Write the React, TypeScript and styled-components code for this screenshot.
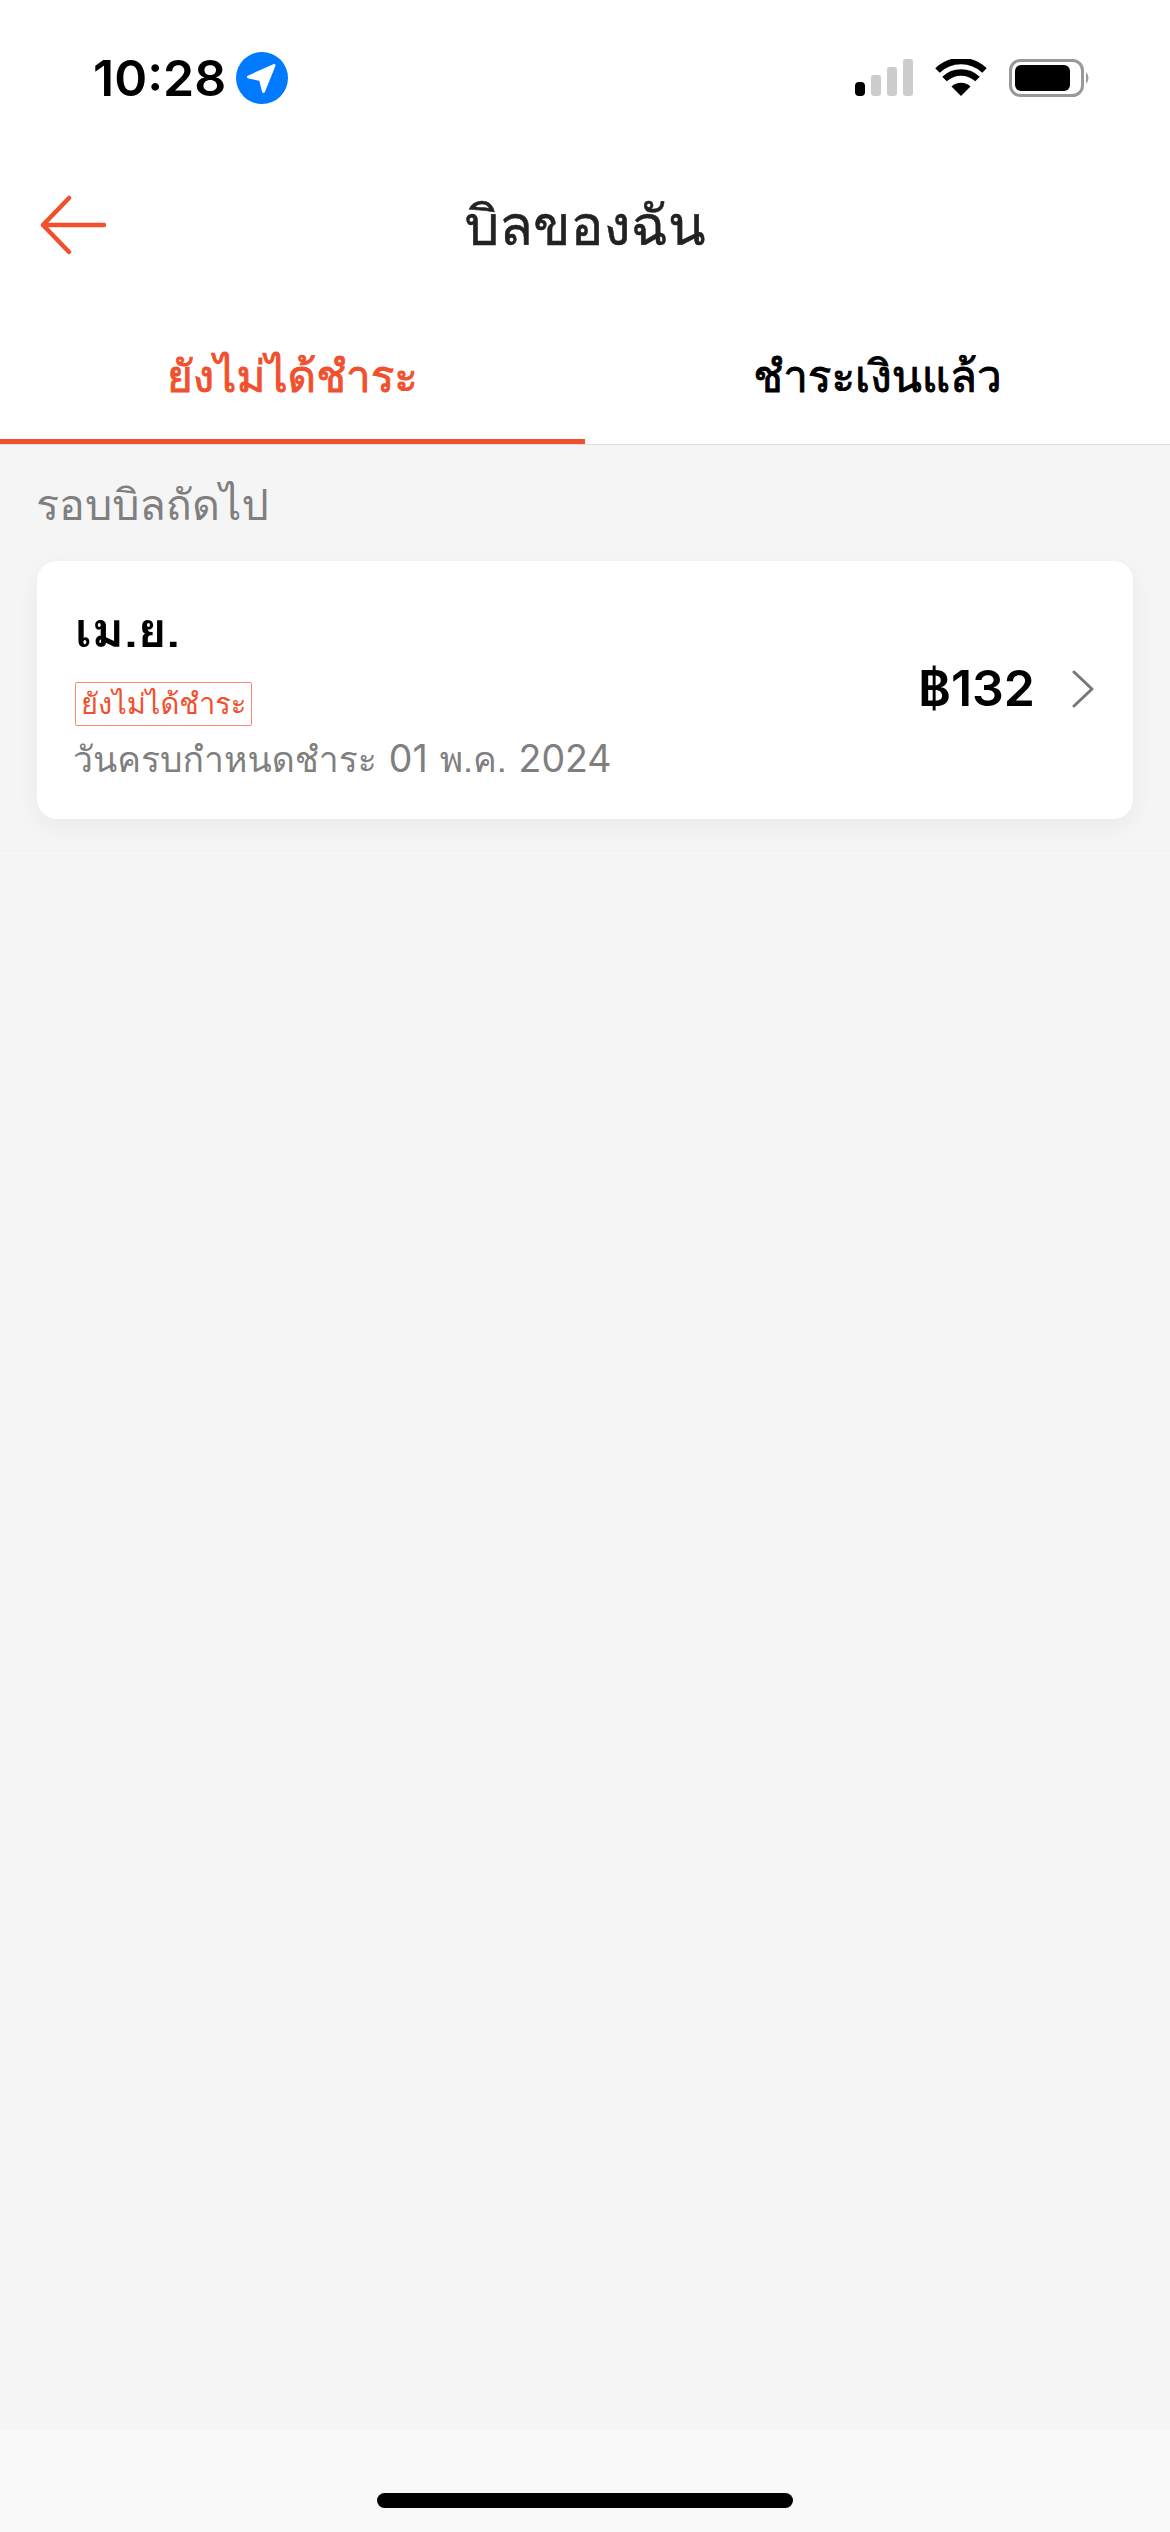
import * as React from "react";
import styled, { createGlobalStyle } from "styled-components";

const THAI = `Thonburi, Loma, Garuda, "Noto Sans Thai Looped", "Noto Sans Thai", "Noto Sans", sans-serif`;

const Global = createGlobalStyle`
    html, body {
        margin: 0;
        padding: 0;
        background: #f5f5f5;
    }
    * {
        box-sizing: border-box;
    }
`;

const App: React.FC = () => {
    return (
        <>
            <Global />
            <Page>
                <StatusBar>
                    <TimeGroup>
                        <Time>10:28</Time>
                        <svg width="52" height="52" viewBox="0 0 52 52">
                            <circle cx="26" cy="26" r="26" fill="#007aff" />
                            <path
                                d="M38 13.5 L12.5 25 L24.5 27.5 L27.5 39.5 Z"
                                fill="#fff"
                                stroke="#fff"
                                strokeWidth="3"
                                strokeLinejoin="round"
                            />
                        </svg>
                    </TimeGroup>
                    <StatusIcons>
                        <svg width="58" height="38" viewBox="0 0 58 38">
                            <rect x="0" y="23" width="10" height="14" rx="4" fill="#000" />
                            <rect x="16" y="16" width="10" height="21" rx="3" fill="#ccc" />
                            <rect x="32" y="8" width="10" height="29" rx="3" fill="#ccc" />
                            <rect x="48" y="0" width="10" height="37" rx="3" fill="#ccc" />
                        </svg>
                        <svg width="52" height="38" viewBox="0 0 52 38">
                            <path d="M26 37 L16.5 27.5 A14 14 0 0 1 35.5 27.5 Z" fill="#000" />
                            <path
                                d="M9.5 20 A24 24 0 0 1 42.5 20"
                                fill="none"
                                stroke="#000"
                                strokeWidth="6.5"
                            />
                            <path
                                d="M2.5 11.5 A34 34 0 0 1 49.5 11.5"
                                fill="none"
                                stroke="#000"
                                strokeWidth="6.5"
                            />
                        </svg>
                        <svg width="82" height="38" viewBox="0 0 82 38">
                            <rect
                                x="1.5"
                                y="1.5"
                                width="72"
                                height="35"
                                rx="10"
                                fill="#fff"
                                stroke="#999"
                                strokeWidth="3"
                            />
                            <rect x="6" y="6" width="55" height="26" rx="6" fill="#000" />
                            <path d="M77 13 Q82 19 77 25 Z" fill="#999" />
                        </svg>
                    </StatusIcons>
                </StatusBar>

                <Header>
                    <BackButton>
                        <svg width="66" height="60" viewBox="0 0 66 60">
                            <path
                                d="M29 3 L3 30 L29 57 M3 30 H64"
                                fill="none"
                                stroke="#f1502e"
                                strokeWidth="4.5"
                                strokeLinecap="round"
                                strokeLinejoin="round"
                            />
                        </svg>
                    </BackButton>
                    <Title>บิลของฉัน</Title>
                </Header>

                <Tabs>
                    <Tab $active>ยังไม่ได้ชำระ</Tab>
                    <Tab>ชำระเงินแล้ว</Tab>
                </Tabs>

                <Section>
                    <SectionLabel>รอบบิลถัดไป</SectionLabel>
                    <BillCard>
                        <BillInfo>
                            <BillMonth>เม.ย.</BillMonth>
                            <Badge>ยังไม่ได้ชำระ</Badge>
                            <DueDate>
                                วันครบกำหนดชำระ <Digits>01</Digits> พ.ค. <Digits>2024</Digits>
                            </DueDate>
                        </BillInfo>
                        <Amount>฿132</Amount>
                        <Chevron width="24" height="38" viewBox="0 0 24 38">
                            <path
                                d="M3 2 L21 19 L3 36"
                                fill="none"
                                stroke="#777"
                                strokeWidth="3"
                                strokeLinecap="round"
                                strokeLinejoin="round"
                            />
                        </Chevron>
                    </BillCard>
                </Section>

                <Spacer />

                <HomeArea>
                    <HomeBar />
                </HomeArea>
            </Page>
        </>
    );
};

const Page = styled.div`
    width: 1170px;
    height: 2532px;
    display: flex;
    flex-direction: column;
    background: #f5f5f5;
    overflow: hidden;
    font-family: ${THAI};
`;

const StatusBar = styled.div`
    height: 150px;
    background: #fff;
    padding: 6px 79px 0 93px;
    display: flex;
    align-items: center;
    justify-content: space-between;
`;

const TimeGroup = styled.div`
    display: flex;
    align-items: center;
    gap: 10px;
`;

const Time = styled.div`
    font-family: Inter, sans-serif;
    font-size: 50px;
    font-weight: 600;
    line-height: 52px;
    color: #000;
`;

const StatusIcons = styled.div`
    display: flex;
    align-items: center;
    gap: 22px;
`;

const Header = styled.div`
    position: relative;
    height: 150px;
    background: #fff;
    display: flex;
    align-items: center;
    justify-content: center;
`;

const BackButton = styled.div`
    position: absolute;
    left: 40px;
    top: 45px;
    height: 60px;
`;

const Title = styled.div`
    font-size: 55px;
    font-weight: 400;
    -webkit-text-stroke: 0.5px #222;
    color: #222;
`;

const Tabs = styled.div`
    height: 145px;
    background: #fff;
    display: flex;
    border-bottom: 1px solid #ddd;
`;

const Tab = styled.div<{ $active?: boolean }>`
    flex: 1;
    display: flex;
    align-items: center;
    justify-content: center;
    padding-top: 12px;
    font-size: 44px;
    font-weight: 400;
    -webkit-text-stroke: 0.9px currentColor;
    color: ${(p) => (p.$active ? "#f1502e" : "#000")};
    border-bottom: 5px solid ${(p) => (p.$active ? "#f1502e" : "transparent")};
`;

const Section = styled.div`
    height: 406px;
    padding: 0 37px;
    background: #f5f5f5;
    border-bottom: 1px solid #f0f0f0;
`;

const SectionLabel = styled.div`
    height: 116px;
    display: flex;
    align-items: center;
    padding-top: 4px;
    margin-left: -1px;
    font-size: 43px;
    color: #7f7f7f;
`;

const BillCard = styled.div`
    height: 258px;
    background: #fff;
    border-radius: 20px;
    box-shadow: 0 8px 24px rgba(0, 0, 0, 0.05);
    padding: 0 38px;
    display: flex;
    align-items: center;
`;

const BillInfo = styled.div`
    flex: 1;
    display: flex;
    flex-direction: column;
    align-items: flex-start;
    padding-top: 4px;
`;

const BillMonth = styled.div`
    font-size: 49px;
    font-weight: 600;
    line-height: 60px;
    color: #000;
    margin-bottom: 22px;
`;

const Badge = styled.div`
    height: 44px;
    padding: 0 5px;
    display: flex;
    align-items: center;
    font-size: 29px;
    color: #f1502e;
    border: 1px solid #f98a73;
    border-radius: 2px;
`;

const DueDate = styled.div`
    font-size: 35.5px;
    line-height: 50px;
    color: #7f7f7f;
    margin-top: 8px;
    margin-left: -2px;
`;

const Digits = styled.span`
    font-family: Inter, sans-serif;
    font-size: 37.5px;
`;

const Amount = styled.div`
    font-family: Inter, ${THAI};
    font-size: 50px;
    font-weight: 600;
    color: #000;
    margin-right: 36px;
    margin-bottom: 4px;
`;

const Chevron = styled.svg`
    margin-bottom: 2px;
`;

const Spacer = styled.div`
    flex: 1;
`;

const HomeArea = styled.div`
    height: 102px;
    background: #f9f9f9;
    display: flex;
    justify-content: center;
    padding-top: 63px;
`;

const HomeBar = styled.div`
    width: 416px;
    height: 15px;
    border-radius: 8px;
    background: #000;
`;

export default App;
